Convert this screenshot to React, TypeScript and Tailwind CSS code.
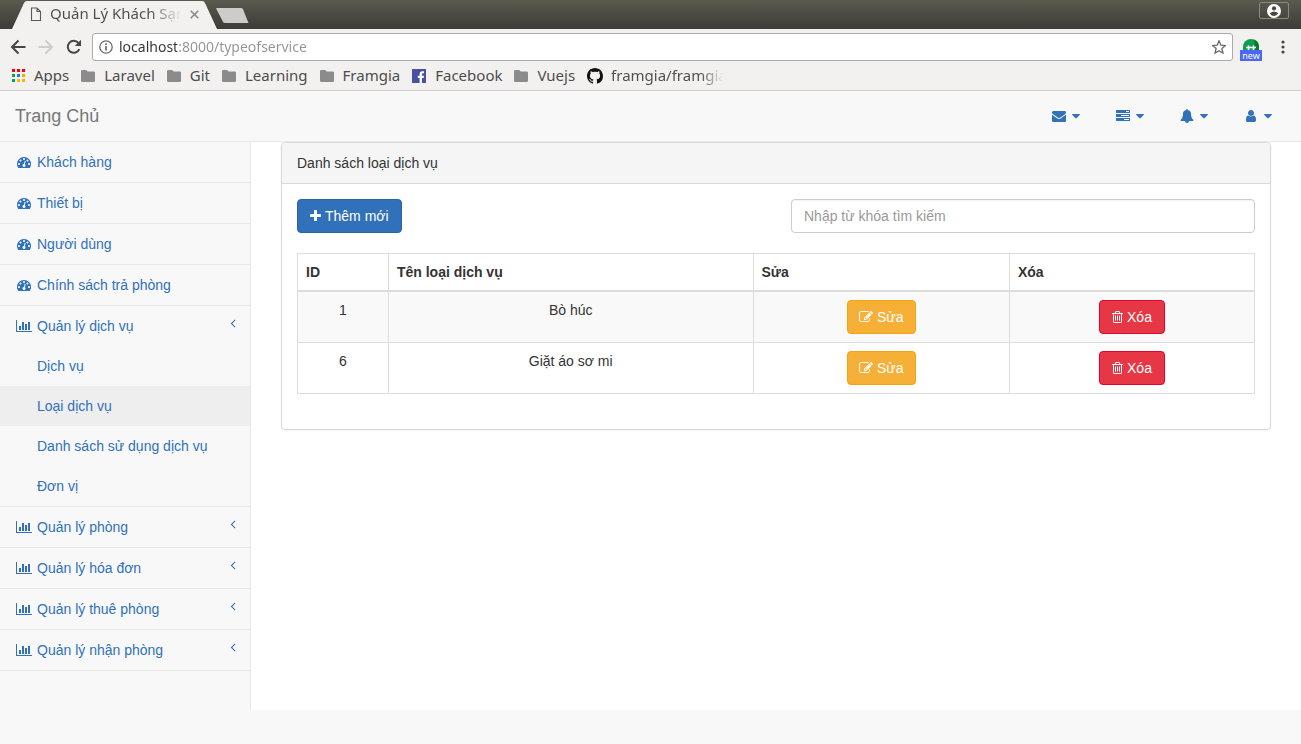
import React from "react";

const paths = {
  dashboard:
    "M384 1152q0-53-37.5-90.5t-90.5-37.5-90.5 37.5-37.5 90.5 37.5 90.5 90.5 37.5 90.5-37.5 37.5-90.5zm192-448q0-53-37.5-90.5t-90.5-37.5-90.5 37.5-37.5 90.5 37.5 90.5 90.5 37.5 90.5-37.5 37.5-90.5zm428 481l101-382q6-26-7.5-48.5t-38.5-29.5-48 6.5-30 39.5l-101 382q-60 5-107 43.5t-63 98.5q-20 77 20 146t117 89 146-20 89-117q16-60-6-117t-72-91zm660-33q0-53-37.5-90.5t-90.5-37.5-90.5 37.5-37.5 90.5 37.5 90.5 90.5 37.5 90.5-37.5 37.5-90.5zm-640-640q0-53-37.5-90.5t-90.5-37.5-90.5 37.5-37.5 90.5 37.5 90.5 90.5 37.5 90.5-37.5 37.5-90.5zm448 192q0-53-37.5-90.5t-90.5-37.5-90.5 37.5-37.5 90.5 37.5 90.5 90.5 37.5 90.5-37.5 37.5-90.5zm320 448q0 261-141 483-19 29-54 29h-1402q-35 0-54-29-141-221-141-483 0-182 71-348t191-286 286-191 348-71 348 71 286 191 191 286 71 348z",
  tasks:
    "M1024 1408h640v-128h-640v128zm-384-512h1024v-128h-1024v128zm640-512h384v-128h-384v128zm512 832v256q0 26-19 45t-45 19h-1664q-26 0-45-19t-19-45v-256q0-26 19-45t45-19h1664q26 0 45 19t19 45zm0-512v256q0 26-19 45t-45 19h-1664q-26 0-45-19t-19-45v-256q0-26 19-45t45-19h1664q26 0 45 19t19 45zm0-512v256q0 26-19 45t-45 19h-1664q-26 0-45-19t-19-45v-256q0-26 19-45t45-19h1664q26 0 45 19t19 45z",
  envelope:
    "M1792 710v794q0 66-47 113t-113 47h-1472q-66 0-113-47t-47-113v-794q44 49 101 87 362 246 497 345 57 42 92.5 65.5t94.5 48 110 24.5h2q51 0 110-24.5t94.5-48 92.5-65.5q170-123 498-345 57-39 100-87zm0-294q0 79-49 151t-122 123q-376 261-468 325-10 7-42.5 31t-54 38.5-52 32.5-57.5 27-50 9h-2q-23 0-50-9t-57.5-27-52-32.5-54-38.5-42.5-31q-91-64-262-182.5t-205-142.5q-62-42-117-115.5t-55-136.5q0-78 41.5-130t118.5-52h1472q65 0 112.5 47t47.5 113z",
  bell: "M912 1696q0-16-16-16-59 0-101.5-42.5t-42.5-101.5q0-16-16-16t-16 16q0 73 51.5 124.5t124.5 51.5q16 0 16-16zm816-288q0 52-38 90t-90 38h-448q0 106-75 181t-181 75-181-75-75-181h-448q-52 0-90-38t-38-90q50-42 91-88t85-119.5 74.5-158.5 50-206 19.5-260q0-152 117-282.5t307-158.5q-8-19-8-39 0-40 28-68t68-28 68 28 28 68q0 20-8 39 190 28 307 158.5t117 282.5q0 139 19.5 260t50 206 74.5 158.5 85 119.5 91 88z",
  user: "M1536 1399q0 109-62.5 187t-150.5 78h-854q-88 0-150.5-78t-62.5-187q0-85 8.5-160.5t31.5-152 58.5-131 94-89 134.5-34.5q131 128 313 128t313-128q76 0 134.5 34.5t94 89 58.5 131 31.5 152 8.5 160.5zm-256-887q0 159-112.5 271.5t-271.5 112.5-271.5-112.5-112.5-271.5 112.5-271.5 271.5-112.5 271.5 112.5 112.5 271.5z",
  edit: "M888 1184l116-116-152-152-116 116v56h96v96h56zm440-720q-16-16-33 1l-350 350q-17 17-1 33t33-1l350-350q17-17 1-33zm80 594v190q0 119-84.5 203.5t-203.5 84.5h-832q-119 0-203.5-84.5t-84.5-203.5v-832q0-119 84.5-203.5t203.5-84.5h832q63 0 117 25 15 7 18 23 3 17-9 29l-49 49q-14 14-32 8-23-6-45-6h-832q-66 0-113 47t-47 113v832q0 66 47 113t113 47h832q66 0 113-47t47-113v-126q0-13 9-22l64-64q15-15 35-7t20 29zm-96-738l288 288-672 672h-288v-288zm444 132l-92 92-288-288 92-92q28-28 68-28t68 28l152 152q28 28 28 68t-28 68z",
  trash:
    "M704 736v576q0 14-9 23t-23 9h-64q-14 0-23-9t-9-23v-576q0-14 9-23t23-9h64q14 0 23 9t9 23zm256 0v576q0 14-9 23t-23 9h-64q-14 0-23-9t-9-23v-576q0-14 9-23t23-9h64q14 0 23 9t9 23zm256 0v576q0 14-9 23t-23 9h-64q-14 0-23-9t-9-23v-576q0-14 9-23t23-9h64q14 0 23 9t9 23zm128 724v-948h-896v948q0 22 7 40.5t14.5 27 10.5 8.5h832q3 0 10.5-8.5t14.5-27 7-40.5zm-672-1076h448l-48-117q-7-9-17-11h-317q-10 2-17 11zm928 32v64q0 14-9 23t-23 9h-96v948q0 83-47 143.5t-113 60.5h-832q-66 0-113-58.5t-47-141.5v-952h-96q-14 0-23-9t-9-23v-64q0-14 9-23t23-9h309l70-167q15-37 54-63t79-26h320q40 0 79 26t54 63l70 167h309q14 0 23 9t9 23z",
  plus: "M1600 736v192q0 40-28 68t-68 28h-416v416q0 40-28 68t-68 28h-192q-40 0-68-28t-28-68v-416h-416q-40 0-68-28t-28-68v-192q0-40 28-68t68-28h416v-416q0-40 28-68t68-28h192q40 0 68 28t28 68v416h416q40 0 68 28t28 68z",
  angleLeft:
    "M1203 544q0 13-10 23l-393 393 393 393q10 10 10 23t-10 23l-50 50q-10 10-23 10t-23-10l-466-466q-10-10-10-23t10-23l466-466q10-10 23-10t23 10l50 50q10 10 10 23z",
  caretDown:
    "M1408 704q0 26-19 45l-448 448q-19 19-45 19t-45-19l-448-448q-19-19-19-45t19-45 45-19h896q26 0 45 19t19 45z",
};

type GlyphName = keyof typeof paths;

function Glyph({ name, viewBox = "0 0 1792 1792", className = "size-3.5" }: { name: GlyphName; viewBox?: string; className?: string }) {
  return (
    <svg viewBox={viewBox} className={className} fill="currentColor" aria-hidden="true">
      <path d={paths[name]} />
    </svg>
  );
}

function BarChart() {
  return (
    <svg viewBox="0 0 2048 1792" className="h-3.5 w-4" fill="currentColor" aria-hidden="true">
      <path d="M640 896v512h-256v-512h256zm384-512v1024h-256v-1024h256zm1024 1152v128h-2048v-1536h128v1408h1920zm-640-896v768h-256v-768h256zm384-256v1024h-256v-1024h256z" />
    </svg>
  );
}

function Folder() {
  return (
    <svg viewBox="0 0 14 12" className="h-3 w-3.5" fill="#8b8b8b" aria-hidden="true">
      <path d="M1.2 0h4l1.4 1.5h6.2A1.2 1.2 0 0 1 14 2.7v8.1a1.2 1.2 0 0 1-1.2 1.2H1.2A1.2 1.2 0 0 1 0 10.8V1.2A1.2 1.2 0 0 1 1.2 0z" />
    </svg>
  );
}

function AppsGrid() {
  const colours = ["#f00", "#f00", "#f00", "#00a651", "#1e73ff", "#ffa800", "#00a651", "#ffb400", "#ffb400"];
  return (
    <svg viewBox="0 0 13 13" className="size-[13px]" aria-hidden="true">
      {colours.map((c, i) => (
        <rect key={i} x={(i % 3) * 5} y={Math.floor(i / 3) * 5} width="3" height="3" fill={c} />
      ))}
    </svg>
  );
}

function FacebookLogo() {
  return (
    <svg viewBox="0 0 14 14" className="size-3.5" aria-hidden="true">
      <rect width="14" height="14" fill="#4a51a3" />
      <path d="M7.6 14V8.9H5.8V6.8h1.8V5.2c0-1.9 1.1-2.9 2.8-2.9h1.6v2h-1c-.9 0-1.1.4-1.1 1.1v1.4H12l-.3 2.1H9.9V14z" fill="#fff" />
    </svg>
  );
}

function GithubLogo() {
  return (
    <svg viewBox="0 0 16 16" className="size-4" fill="#111" aria-hidden="true">
      <path d="M8 0C3.58 0 0 3.58 0 8c0 3.54 2.29 6.53 5.47 7.59.4.07.55-.17.55-.38 0-.19-.01-.82-.01-1.49-2.01.37-2.53-.49-2.69-.94-.09-.23-.48-.94-.82-1.13-.28-.15-.68-.52-.01-.53.63-.01 1.08.58 1.23.82.72 1.21 1.87.87 2.33.66.07-.52.28-.87.51-1.07-1.78-.2-3.64-.89-3.64-3.95 0-.87.31-1.59.82-2.15-.08-.2-.36-1.02.08-2.12 0 0 .67-.21 2.2.82.64-.18 1.32-.27 2-.27s1.36.09 2 .27c1.53-1.04 2.2-.82 2.2-.82.44 1.1.16 1.92.08 2.12.51.56.82 1.27.82 2.15 0 3.07-1.87 3.75-3.65 3.95.29.25.54.73.54 1.48 0 1.07-.01 1.93-.01 2.2 0 .21.15.46.55.38A8.01 8.01 0 0 0 16 8c0-4.42-3.58-8-8-8z" />
    </svg>
  );
}

const bookmarks = [
  { label: "Apps", icon: <AppsGrid /> },
  { label: "Laravel", icon: <Folder /> },
  { label: "Git", icon: <Folder /> },
  { label: "Learning", icon: <Folder /> },
  { label: "Framgia", icon: <Folder /> },
  { label: "Facebook", icon: <FacebookLogo /> },
  { label: "Vuejs", icon: <Folder /> },
];

function BrowserBar() {
  return (
    <header className="font-['Noto_Sans',sans-serif] text-[#4c4c4c]">
      <div className="flex h-[29px] items-start justify-between bg-linear-to-b from-[#5b5a4e] to-[#3c3b37] pr-3">
        <div className="flex h-full items-start">
          <div className="relative ml-3 flex h-full w-[206px] items-center pr-4 pl-[18px]">
            <svg viewBox="0 0 206 29" preserveAspectRatio="none" className="absolute inset-0 size-full" aria-hidden="true">
              <path d="M0 29 12 3Q13 1 15 1H190Q192 1 193 3L205 29z" fill="#f2f1f0" />
            </svg>
            <svg viewBox="0 0 12 15" className="relative h-[15px] w-3 shrink-0" fill="none" stroke="#5a5a5a" strokeWidth="1.100" aria-hidden="true">
              <path d="M1.500 1H7l3.500 3.500V13.500h-9zM7 1v3.500h3.500" />
            </svg>
            <span className="relative ml-2 w-[132px] bg-linear-to-r from-[#4c4c4c] from-75% to-transparent bg-clip-text pb-1 text-[15px] leading-6 whitespace-nowrap text-transparent">
              Quản Lý Khách Sạn
            </span>
            <button type="button" aria-label="Close tab" className="relative ml-2 shrink-0">
              <svg viewBox="0 0 9 9" className="size-[9px]" stroke="#8a8a8a" strokeWidth="1.600" aria-hidden="true">
                <path d="M.7.7l7.600 7.600M8.300.7L.7 8.300" />
              </svg>
            </button>
          </div>
          <button type="button" aria-label="New tab" className="mt-2 -ml-0.5">
            <svg viewBox="0 0 33 15" className="h-[15px] w-[33px]" aria-hidden="true">
              <path d="M1 0h24q1.500 0 2 1.200L32.500 15H9Q7.500 15 7 13.800L.3 1Q0 0 1 0z" fill="#cdccca" />
            </svg>
          </button>
        </div>
        <button type="button" aria-label="Profile" className="mt-0.5 flex h-[17px] w-[30px] items-center justify-center rounded-xs border border-[#8a8981]">
          <svg viewBox="0 0 14 14" className="size-3.5" aria-hidden="true">
            <circle cx="7" cy="7" r="7" fill="#fff" />
            <circle cx="7" cy="4.400" r="2.100" fill="#4a493f" />
            <path d="M2.800 9.300Q7 5.900 11.200 9.300 9.800 11.900 7 11.900T2.800 9.300z" fill="#4a493f" />
          </svg>
        </button>
      </div>

      <div className="border-b border-[#cfcecc] bg-[#f2f1f0]">
        <div className="flex h-9 items-center pl-2.5">
          <button type="button" aria-label="Back">
            <svg viewBox="0 0 16 16" className="size-4" fill="none" stroke="#464646" strokeWidth="2" aria-hidden="true">
              <path d="M8.500 1.500L2 8l6.500 6.500M2 8h13.500" />
            </svg>
          </button>
          <button type="button" aria-label="Forward" className="ml-3">
            <svg viewBox="0 0 16 16" className="size-4" fill="none" stroke="#cfcecd" strokeWidth="2" aria-hidden="true">
              <path d="M7.500 1.500L14 8l-6.500 6.500M14 8H.5" />
            </svg>
          </button>
          <button type="button" aria-label="Reload" className="ml-3">
            <svg viewBox="0 0 16 16" className="size-4" aria-hidden="true">
              <path d="M13.300 10.200A6 6 0 1 1 12.400 4" fill="none" stroke="#464646" strokeWidth="2" />
              <path d="M15 .8V7H8.800z" fill="#464646" />
            </svg>
          </button>
          <div className="ml-2.5 flex h-7 min-w-0 flex-1 items-center rounded-[3px] border border-[#adabaa] bg-white px-1.5">
            <svg viewBox="0 0 14 14" className="size-3.5 shrink-0" fill="none" stroke="#6a6a6a" strokeWidth="1.300" aria-hidden="true">
              <circle cx="7" cy="7" r="6.200" />
              <path d="M7 6v4.500M7 3.300v1.600" strokeWidth="1.700" />
            </svg>
            <input
              aria-label="Address"
              defaultValue="localhost:8000/typeofservice"
              className="ml-1.5 min-w-0 flex-1 bg-[linear-gradient(to_right,#333_58px,#949494_58px)] bg-clip-text text-sm text-transparent outline-none"
            />
            <button type="button" aria-label="Bookmark this page">
              <svg viewBox="1 1 14 14" className="size-3.5" fill="none" stroke="#6a6a6a" strokeWidth="1.300" aria-hidden="true">
                <path d="M8 1.800l1.800 4.300 4.700.4-3.600 3 1.100 4.600L8 11.700l-4 2.400 1.100-4.600-3.600-3 4.700-.4z" />
              </svg>
            </button>
          </div>
          <button type="button" aria-label="Extension: new" className="ml-[7px] flex h-full flex-col items-center pt-2.5">
            <svg viewBox="0 0 16 11" className="h-[11px] w-4" aria-hidden="true">
              <path d="M0 8a8 8 0 0 1 16 0v3H0z" fill="#0f9d4e" />
              <path d="M11 .6A8 8 0 0 1 16 8v3h-4z" fill="#0a7a2c" />
              <path d="M3 8.500h10M5.500 6.500v4.500M10.500 6.500v4.500" stroke="#fff" strokeWidth="1.600" />
            </svg>
            <span className="w-[22px] bg-[#4a68f5] text-center text-[9px] leading-[11px] text-white">new</span>
          </button>
          <button type="button" aria-label="Menu" className="mr-3 ml-[15px]">
            <svg viewBox="0 0 12 14" className="h-3.5 w-3" fill="#464646" aria-hidden="true">
              <circle cx="6" cy="2" r="1.600" />
              <circle cx="6" cy="7" r="1.600" />
              <circle cx="6" cy="12" r="1.600" />
            </svg>
          </button>
        </div>
        <nav aria-label="Bookmarks" className="flex h-[25px] items-center gap-3 pb-1 pl-3 text-[15px]">
          {bookmarks.map((b) => (
            <a key={b.label} href="#" className="flex items-center gap-[9px]">
              {b.icon}
              {b.label}
            </a>
          ))}
          <a href="#" className="flex items-center gap-2">
            <GithubLogo />
            <span className="w-28 bg-linear-to-r from-[#4c4c4c] from-80% to-transparent bg-clip-text whitespace-nowrap text-transparent">
              framgia/framgia
            </span>
          </a>
        </nav>
      </div>
    </header>
  );
}

const topMenus: { label: string; icon: GlyphName }[] = [
  { label: "Messages", icon: "envelope" },
  { label: "Tasks", icon: "tasks" },
  { label: "Alerts", icon: "bell" },
  { label: "Account", icon: "user" },
];

const plainItems = ["Khách hàng", "Thiết bị", "Người dùng", "Chính sách trả phòng"];
const serviceItems = ["Dịch vụ", "Loại dịch vụ", "Danh sách sử dụng dịch vụ", "Đơn vị"];
const groups = ["Quản lý phòng", "Quản lý hóa đơn", "Quản lý thuê phòng", "Quản lý nhận phòng"];

function GroupLink({ label }: { label: string }) {
  return (
    <a href="#" className="flex h-10 items-center gap-1 pr-3.5 pl-[15px]">
      <span className="flex w-[18px] justify-center">
        <BarChart />
      </span>
      {label}
      <Glyph name="angleLeft" viewBox="512 0 768 1792" className="mb-1.5 ml-auto h-3.5 w-1.5" />
    </a>
  );
}

function Sidebar() {
  return (
    <nav aria-label="Main" className="w-[251px] shrink-0 border-r border-[#e7e7e7] bg-[#f8f8f8] pb-[39px] text-[#3071ba]">
      <ul>
        {plainItems.map((label) => (
          <li key={label} className="border-b border-[#e7e7e7]">
            <a href="#" className="flex h-10 items-center gap-1 px-[15px]">
              <span className="flex w-[18px] justify-center">
                <Glyph name="dashboard" />
              </span>
              {label}
            </a>
          </li>
        ))}
        <li className="border-b border-[#e7e7e7]">
          <GroupLink label="Quản lý dịch vụ" />
          <ul>
            {serviceItems.map((label) => (
              <li key={label}>
                <a
                  href="#"
                  className={
                    label === "Loại dịch vụ"
                      ? "flex h-10 items-center bg-[#eeeeee] pl-[37px]"
                      : "flex h-10 items-center pl-[37px]"
                  }
                >
                  {label}
                </a>
              </li>
            ))}
          </ul>
        </li>
        {groups.map((label) => (
          <li key={label} className="border-b border-[#e7e7e7]">
            <GroupLink label={label} />
          </li>
        ))}
      </ul>
    </nav>
  );
}

const services = [
  { id: 1, name: "Bò húc" },
  { id: 6, name: "Giặt áo sơ mi" },
];

function ServicePanel() {
  return (
    <section className="rounded border border-[#d9d9d9] bg-white shadow-xs">
      <h1 className="rounded-t border-b border-[#d9d9d9] bg-[#f5f5f5] px-[15px] py-2.5">Danh sách loại dịch vụ</h1>
      <div className="px-[15px] pt-[15px] pb-[35px]">
        <div className="flex items-center justify-between">
          <button
            type="button"
            className="flex h-[34px] items-center gap-1 rounded border border-[#2a63a5] bg-[#3071ba] px-3 text-white"
          >
            <Glyph name="plus" viewBox="192 0 1408 1792" className="h-3.5 w-[11px]" />
            Thêm mới
          </button>
          <input
            type="text"
            aria-label="Nhập từ khóa tìm kiếm"
            placeholder="Nhập từ khóa tìm kiếm"
            className="h-[34px] w-[464px] rounded border border-[#cccccc] px-3 inset-shadow-xs placeholder:text-[#999999]"
          />
        </div>
        <table className="mt-5 w-full table-fixed border-collapse border border-[#dddddd]">
          <colgroup>
            <col className="w-[9.5%]" />
            <col className="w-[38.1%]" />
            <col className="w-[26.8%]" />
            <col className="w-[25.6%]" />
          </colgroup>
          <thead>
            <tr className="text-left">
              {["ID", "Tên loại dịch vụ", "Sửa", "Xóa"].map((h) => (
                <th key={h} scope="col" className="border border-b-2 border-[#dddddd] p-2 font-bold">
                  {h}
                </th>
              ))}
            </tr>
          </thead>
          <tbody>
            {services.map((s) => (
              <tr key={s.id} className="text-center align-top odd:bg-[#f9f9f9]">
                <td className="border border-[#dddddd] p-2">{s.id}</td>
                <td className="border border-[#dddddd] p-2">{s.name}</td>
                <td className="border border-[#dddddd] p-2">
                  <button
                    type="button"
                    className="mx-auto flex h-[34px] items-center gap-1 rounded border border-[#f4a50c] bg-[#f6b037] px-[11px] text-white"
                  >
                    <Glyph name="edit" />
                    Sửa
                  </button>
                </td>
                <td className="border border-[#dddddd] p-2">
                  <button
                    type="button"
                    className="mx-auto flex h-[34px] items-center gap-1 rounded border border-[#e0052c] bg-[#e73744] px-3 text-white"
                  >
                    <Glyph name="trash" viewBox="192 0 1408 1792" className="h-3.5 w-[11px]" />
                    Xóa
                  </button>
                </td>
              </tr>
            ))}
          </tbody>
        </table>
      </div>
    </section>
  );
}

export default function App() {
  return (
    <div className="min-h-screen bg-[#f8f8f8]">
      <BrowserBar />
      <div className="font-['Liberation_Sans',Arial,sans-serif] text-sm leading-5 text-[#333333]">
        <div className="flex h-[51px] items-center justify-between border-b border-[#e7e7e7] pr-3 pl-[15px]">
          <a href="#" className="text-lg text-[#777777]">
            Trang Chủ
          </a>
          <ul className="flex text-[#3071ba]">
            {topMenus.map((m) => (
              <li key={m.label}>
                <button type="button" aria-label={m.label} className="flex h-[50px] items-center gap-1 px-[17px]">
                  <span className="flex w-[18px] justify-center">
                    <Glyph name={m.icon} />
                  </span>
                  <Glyph name="caretDown" viewBox="384 0 1024 1792" className="h-3.5 w-2" />
                </button>
              </li>
            ))}
          </ul>
        </div>
        <div className="flex">
          <Sidebar />
          <main className="min-w-0 flex-1 bg-white px-[30px]">
            <ServicePanel />
          </main>
        </div>
      </div>
    </div>
  );
}
